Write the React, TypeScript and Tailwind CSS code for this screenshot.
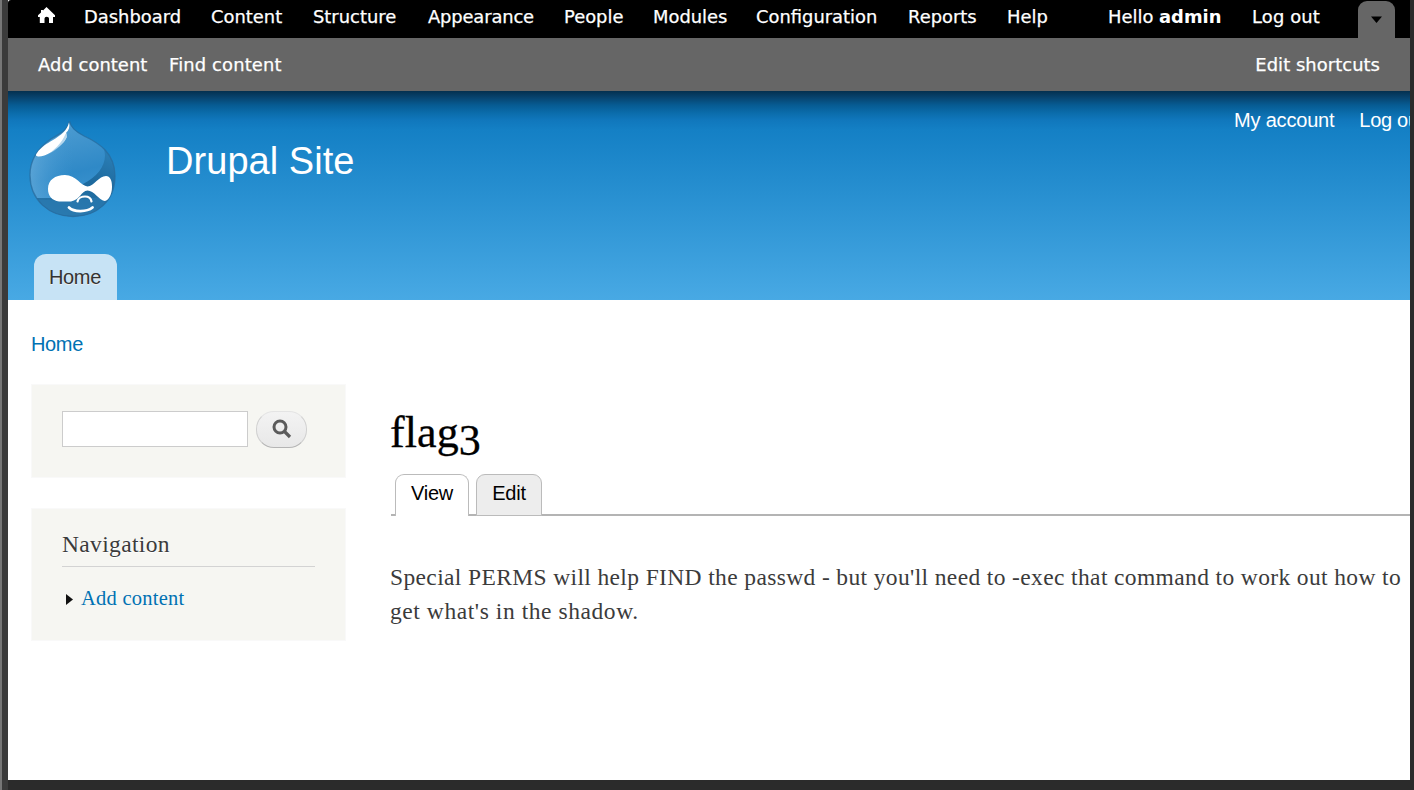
import React from "react";

const menu = [
  { label: "Dashboard", cls: "w-[127px]" },
  { label: "Content", cls: "w-[102px]" },
  { label: "Structure", cls: "w-[115px]" },
  { label: "Appearance", cls: "w-[136px] tracking-[-0.15px]" },
  { label: "People", cls: "w-[89px]" },
  { label: "Modules", cls: "w-[103px]" },
  { label: "Configuration", cls: "w-[152px]" },
  { label: "Reports", cls: "w-[99px]" },
  { label: "Help", cls: "w-[60px]" },
];

function HomeIcon() {
  return (
    <svg width="18" height="17" viewBox="0 0 18 17" className="mt-[7px] block" fill="#fff">
      <path d="M8.500 0 L17 8.300 V10 H15 V16 H11 V11.500 Q11 9.800 8.700 9.800 Q6.500 9.800 6.500 11.500 V16 H1.800 V10 H0 V8.300 L3 5.500 V3 H5 V3.500 Z" />
    </svg>
  );
}

function Toolbar() {
  return (
    <div className="font-['DejaVu_Sans',sans-serif] text-[17.9px] whitespace-nowrap text-white [-webkit-text-stroke:0.25px_#fff]">
      <div className="flex h-[38px] justify-between rounded-tl-[3px] bg-black pr-[15px] pl-[30px] leading-[34px]">
        <div className="flex">
          <a className="block w-[46px]"><HomeIcon /></a>
          {menu.map((m) => (
            <a key={m.label} className={m.cls}>{m.label}</a>
          ))}
        </div>
        <div className="flex">
          <span className="w-[144px]">Hello <b className="[-webkit-text-stroke:0px]">admin</b></span>
          <a className="w-[106px] tracking-[0.15px]">Log out</a>
          <a className="mt-px flex h-[37px] w-[37px] items-center justify-center rounded-t-[9px] bg-[#666]">
            <svg width="12" height="8" viewBox="0 0 12 8" className="mt-px"><path d="M0 0.500H11L5.500 7Z" fill="#000" /></svg>
          </a>
        </div>
      </div>
      <div className="flex h-[53px] justify-between bg-[#666] pr-[30px] pl-[30px] leading-[54px]">
        <div className="flex">
          <a className="w-[131px] tracking-[0.05px]">Add content</a>
          <a className="tracking-[0.15px]">Find content</a>
        </div>
        <a className="tracking-[0.06px]">Edit shortcuts</a>
      </div>
    </div>
  );
}

function DrupalLogo() {
  const drop = "M40.500 0C41.500 7 47 11 55 15C70 22 86 32 86 55C86 80 68 95.500 44 95.500C20 95.500 1 79 1 54C1 39 9 27 22 18C33 12 39 8 40.500 0Z";
  return (
    <svg width="88" height="98" viewBox="0 0 88 98" className="block">
      <defs>
        <linearGradient id="body" x1="0.3" y1="0.1" x2="0.5" y2="1">
          <stop offset="0" stopColor="#4a9ad0" />
          <stop offset="0.5" stopColor="#2f89c7" />
          <stop offset="0.8" stopColor="#3d94cf" />
          <stop offset="1" stopColor="#2d86c6" />
        </linearGradient>
        <linearGradient id="glow" x1="0" y1="0" x2="1" y2="0">
          <stop offset="0" stopColor="#6db0dd" stopOpacity="0.65" />
          <stop offset="0.5" stopColor="#4199d5" stopOpacity="0" />
        </linearGradient>
        <linearGradient id="shade" x1="0.8" y1="0" x2="0.3" y2="1">
          <stop offset="0" stopColor="#2c80b8" />
          <stop offset="0.45" stopColor="#1d699d" />
          <stop offset="1" stopColor="#2877ac" />
        </linearGradient>
        <clipPath id="drop"><path d={drop} /></clipPath>
      </defs>
      <g clipPath="url(#drop)">
        <rect width="88" height="98" fill="url(#body)" />
        <rect width="88" height="98" fill="url(#glow)" />
        <path d="M73 24C81 38 72 54 54 63L35 77L3 77L10 97H70L88 78V36Z" fill="url(#shade)" />
        <path d="M3 78C18 80 50 80 88 74V98H0Z" fill="#2b7cb3" opacity="0.6" />
      </g>
      <path d={drop} fill="none" stroke="#26699b" strokeOpacity="0.7" strokeWidth="1.3" />
      <path d="M40 1.500C41 6 40 9 37 12C39 14 38 18 33 23C26 30 16 36 9 35.500Q5.500 35 8 32C12 26 18 22.500 24 19C32 14 38 10 40 1.500Z" fill="#fff" />
      <path d="M38.500 12C38 20 28 31 15 35.500C25 30 33 22 36.500 13Z" fill="#5aa6d8" opacity="0.45" />
      <path d="M19 68C19 59 26 54 36 54C47 54 52 65 58.500 65.500C65 65 70 55 77 55C81 55 83 59 83 66C83 74 79 80 75.500 80C70 79 65 69.500 58.500 69.500C52 70 51 79 42 80.500H30C23 79.500 19 75 19 68Z" fill="#fff" />
      <path d="M48.500 80.500C49 77 53 75.500 56 75.500C60 75.500 62 77.500 62.500 80.500" fill="none" stroke="#fff" strokeWidth="2.200" strokeLinecap="round" />
      <path d="M40 86.500C45 91.500 58 91 63.500 86.500" fill="none" stroke="#fff" strokeWidth="2.800" strokeLinecap="round" />
    </svg>
  );
}

function Header() {
  return (
    <header className="flex h-[209px] flex-col justify-between bg-[linear-gradient(to_bottom,#04304f_0px,#07426c_6px,#075b92_14px,#0b6cab_22px,#1077bc_29px,#1480c5_39px,#48a9e4_209px)] font-['Liberation_Sans',sans-serif] text-[20px] tracking-[-0.2px] text-white">
      <div className="flex">
        <div className="mt-[30px] ml-[21px]"><DrupalLogo /></div>
        <h1 className="mt-[47px] ml-[49px] text-[38px] leading-[46px] tracking-[0.05px] whitespace-nowrap">Drupal Site</h1>
        <nav className="mt-[17px] mr-[-14px] ml-auto flex gap-[25px] leading-[24px] whitespace-nowrap">
          <a>My account</a>
          <a className="tracking-[-0.3px]">Log out</a>
        </nav>
      </div>
      <a className="ml-[26px] h-[46px] w-[83px] rounded-t-[12px] bg-[#c7e3f5] pl-[15px] leading-[46px] tracking-[-0.35px] text-[#333] [text-shadow:0_1px_0_#eee]">Home</a>
    </header>
  );
}

function Sidebar() {
  return (
    <aside className="w-[315px] shrink-0 font-['Liberation_Serif',serif]">
      <div className="flex h-[94px] gap-2 border border-[#f9f9f9] bg-[#f6f6f2] pt-[26px] pl-[30px]">
        <input className="h-[36px] w-[186px] border border-[#ccc] bg-white" />
        <button className="flex h-[37px] w-[51px] items-center justify-center rounded-[18px] border border-[#e4e4e4] border-x-[#d0d0d0] border-b-[#b4b4b4] bg-linear-to-b from-[#f3f3f3] to-[#e8e8e8]">
          <svg width="20" height="20" viewBox="0 0 20 20" fill="none" stroke="#5b5b5b" className="-mt-[2px]">
            <circle cx="8" cy="8" r="6" strokeWidth="3" />
            <path d="M12 12L18 18" strokeWidth="3.200" />
          </svg>
        </button>
      </div>
      <div className="mt-[30px] h-[133px] border border-[#f9f9f9] bg-[#f6f6f2] px-[30px] pt-[19px]">
        <h2 className="h-[39px] border-b border-[#d3d3d3] text-[23.5px] leading-[32px] tracking-[0.35px] text-[#3b3b3b] [text-shadow:0_1px_0_#fff]">Navigation</h2>
        <div className="mt-[16px] flex items-center pl-[4px] text-[20.5px] leading-[30px] tracking-[0.25px] text-[#0071b3]">
          <svg width="7" height="11" viewBox="0 0 7 11" className="mt-[3px] mr-[8px]"><path d="M0 0L7 5.500L0 11Z" fill="#111" /></svg>
          <a>Add content</a>
        </div>
      </div>
    </aside>
  );
}

function Content() {
  return (
    <main className="ml-[44px] flex-1 pt-[21px] font-['Liberation_Serif',serif] whitespace-nowrap">
      <h1 className="text-[44px] leading-[56px] tracking-[0.1px] text-black [-webkit-text-stroke:0.3px_#000]">flag<span className="relative top-[8px]">3</span></h1>
      <div className="ml-px mt-[13px] flex h-[42px] items-start bg-[linear-gradient(#b4b4b4,#b4b4b4)] bg-[length:100%_2px] bg-bottom bg-no-repeat pl-[4px] font-['Liberation_Sans',sans-serif] text-[20px] leading-[37px] tracking-[-0.2px] text-black">
        <a className="mr-[7px] h-[42px] w-[74px] rounded-t-[9px] border border-b-0 border-[#bbb] bg-white text-center">View</a>
        <a className="h-[42px] w-[66px] rounded-t-[9px] border border-[#bbb] bg-[#ededed] text-center">Edit</a>
      </div>
      <p className="mt-[44px] text-[23.5px] leading-[34px] tracking-[0.37px] text-[#3b3b3b]">
        Special PERMS will help FIND the passwd - but you'll need to -exec that command to work out how to<br />
        <span className="tracking-[0.57px]">get what's in the shadow.</span>
      </p>
    </main>
  );
}

export default function App() {
  return (
    <div className="flex h-[790px] w-[1414px] overflow-hidden bg-[#2b2b2b]">
      <div className="w-[2px] bg-[#777]" />
      <div className="w-[6px] bg-[#3b3b3b]" />
      <div className="h-[780px] w-[1402px] overflow-hidden bg-white">
        <Toolbar />
        <Header />
        <div className="mt-[29px] ml-[23px] font-['Liberation_Sans',sans-serif] text-[20px] leading-[30px] tracking-[-0.35px] text-[#0071b3]">Home</div>
        <div className="mt-[25px] flex pl-[23px]">
          <Sidebar />
          <Content />
        </div>
      </div>
    </div>
  );
}
